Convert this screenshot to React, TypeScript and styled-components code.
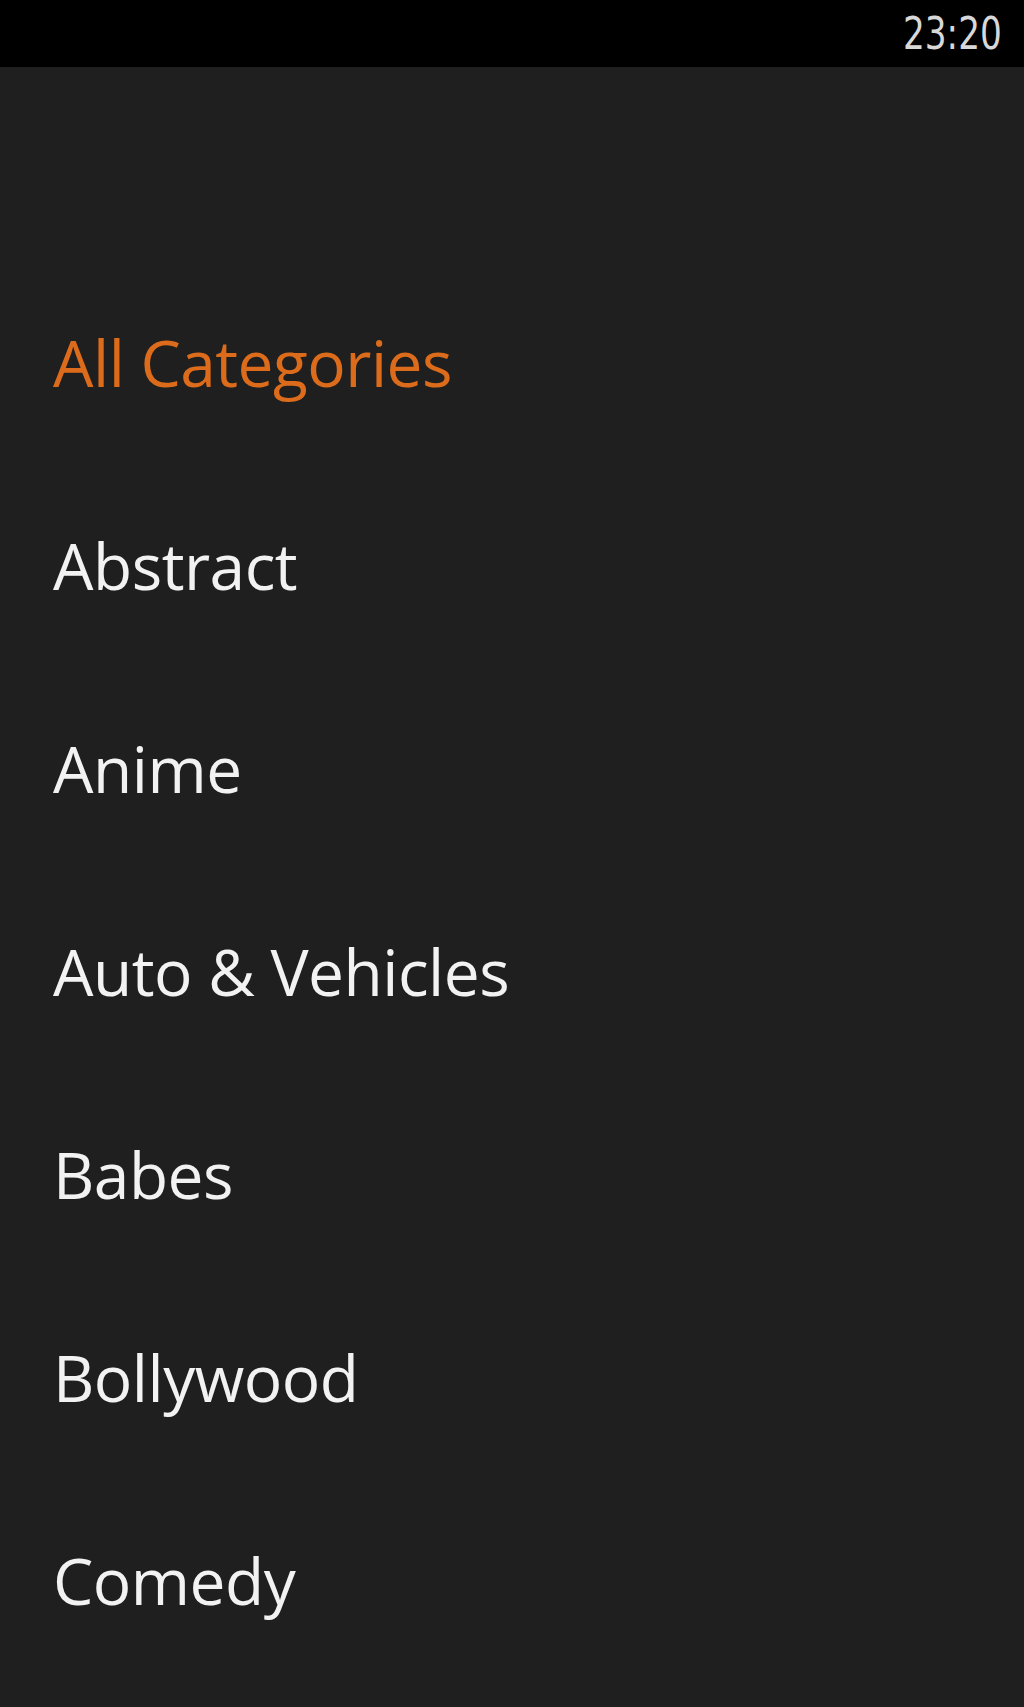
import React from "react";
import styled, { createGlobalStyle } from "styled-components";

const GlobalStyle = createGlobalStyle`
  html, body {
    margin: 0;
    padding: 0;
    background: #1f1f1f;
  }
  body {
    font-family: "Open Sans", "Noto Sans", sans-serif;
  }
`;

const categories = [
  "All Categories",
  "Abstract",
  "Anime",
  "Auto & Vehicles",
  "Babes",
  "Bollywood",
  "Comedy",
];

const Screen = styled.div`
  width: 1024px;
  height: 1707px;
  background: #1f1f1f;
  overflow: hidden;
`;

const StatusBar = styled.div`
  height: 67px;
  background: #000;
  display: flex;
  justify-content: flex-end;
  align-items: flex-start;
  padding-right: 22px;
`;

const Clock = styled.span`
  font-family: "DejaVu Sans", sans-serif;
  font-size: 44px;
  line-height: 1;
  margin-top: 12px;
  color: #d8d8d8;
  display: inline-block;
  transform: scaleX(0.78);
  transform-origin: right center;
`;

const List = styled.ul`
  list-style: none;
  margin: 0;
  padding: 264px 0 0 53px;
`;

const Item = styled.li<{ $active?: boolean }>`
  height: 203px;
  font-size: 64px;
  line-height: 1;
  letter-spacing: -0.5px;
  color: ${(p) => (p.$active ? "#dc6c1b" : "#f2f2f2")};
`;

export default function App() {
  return (
    <Screen>
      <GlobalStyle />
      <StatusBar>
        <Clock>23:20</Clock>
      </StatusBar>
      <List>
        {categories.map((c, i) => (
          <Item key={c} $active={i === 0}>
            {c}
          </Item>
        ))}
      </List>
    </Screen>
  );
}
